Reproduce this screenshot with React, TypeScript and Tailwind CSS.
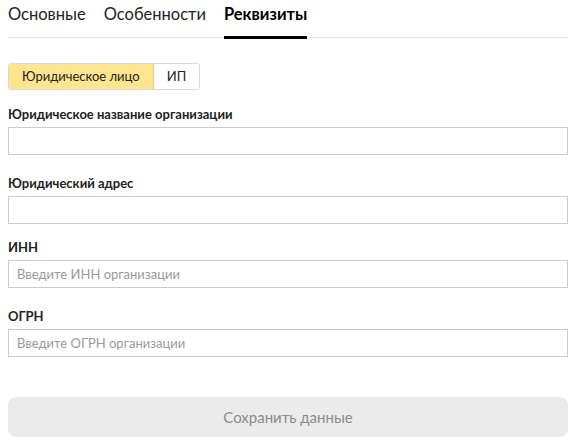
import { useState } from 'react';

const tabs = ['Основные', 'Особенности', 'Реквизиты'];

function Field({ label, placeholder, className }: { label: string; placeholder?: string; className?: string }) {
  return (
    <div className={`flex flex-col ${className ?? ''}`}>
      <label className="text-[13px] font-bold leading-[16px] text-[#222] mb-[5px]">{label}</label>
      <input
        type="text"
        placeholder={placeholder}
        className="h-[28px] w-full border border-[#cccccc] bg-white px-[8px] text-[13px] text-[#222] placeholder:text-[#999] focus:outline-none"
      />
    </div>
  );
}

export default function App() {
  const [tab, setTab] = useState(2);
  const [kind, setKind] = useState<'org' | 'ip'>('org');

  return (
    <div className="w-[576px] h-[446px] overflow-hidden bg-white px-[8px] font-['Lato',sans-serif] text-[#222]">
      {/* Tabs */}
      <div className="flex gap-[18px] border-b border-[#e5e5e5] h-[38px]">
        {tabs.map((t, i) => (
          <button
            key={t}
            onClick={() => setTab(i)}
            className={`relative flex items-start pt-[3px] text-[16.5px] leading-[22px] ${i === tab ? 'font-bold text-black' : 'text-[#222]'}`}
          >
            {t}
            {i === tab && <span className="absolute left-0 right-0 bottom-[-2px] h-[3px] bg-black" />}
          </button>
        ))}
      </div>

      {/* Entity type switch */}
      <div className="mt-[25px] flex w-fit rounded-[3px] border border-[#d9d9d9] overflow-hidden text-[13px] leading-[25px]">
        <button
          onClick={() => setKind('org')}
          className={`px-[13px] ${kind === 'org' ? 'bg-[#fde68f] border-r border-[#e8c968]' : 'bg-white'}`}
        >
          Юридическое лицо
        </button>
        <button
          onClick={() => setKind('ip')}
          className={`px-[13px] ${kind === 'ip' ? 'bg-[#fde68f]' : 'bg-white'}`}
        >
          ИП
        </button>
      </div>

      <Field className="mt-[16px]" label="Юридическое название организации" />
      <Field className="mt-[20px]" label="Юридический адрес" />
      <Field className="mt-[15px]" label="ИНН" placeholder="Введите ИНН организации" />
      <Field className="mt-[20px]" label="ОГРН" placeholder="Введите ОГРН организации" />

      <button className="mt-[40px] h-[40px] w-full rounded-[8px] bg-[#ebebeb] text-[15px] text-[#8a8a8a]">
        Сохранить данные
      </button>
    </div>
  );
}
